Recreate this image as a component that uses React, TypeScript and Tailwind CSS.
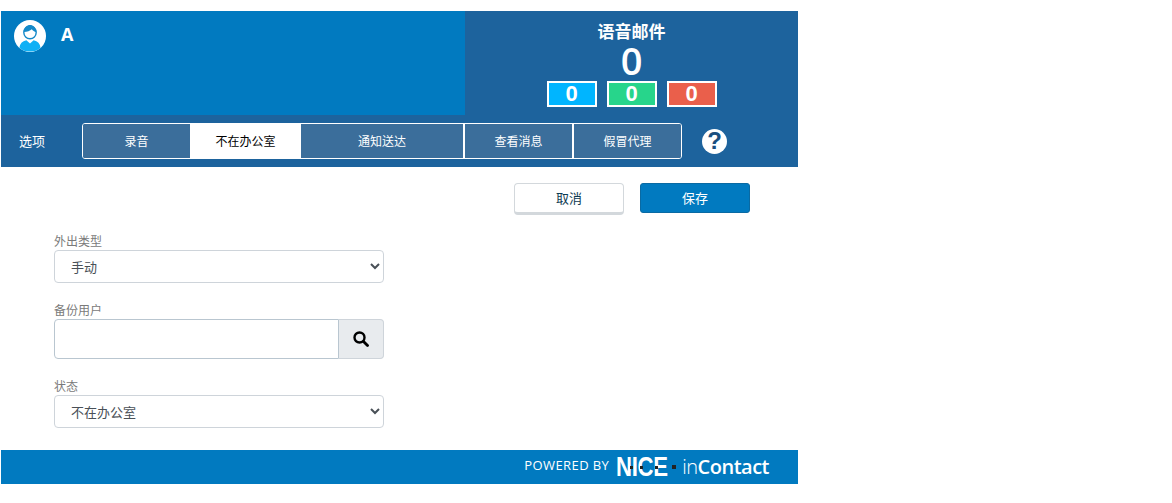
const font = '"Noto Sans CJK SC"';

function Avatar() {
  return (
    <svg width="32" height="32" viewBox="0 0 32 32" className="shrink-0">
      <circle cx="16" cy="16" r="16" fill="#ffffff" />
      <path d="M5.500 28c.3-4.600 2.800-6.600 6.900-7.800l3.600 3.400 3.600-3.400c4.100 1.200 6.600 3.200 6.900 7.800A15.500 15.500 0 0 1 16 31.500 15.500 15.500 0 0 1 5.500 28z" fill="#0fb0f5" />
      <circle cx="16" cy="12.500" r="6.200" fill="none" stroke="#1489c9" strokeWidth="1.400" />
      <path d="M9.800 12c0-4.800 3.200-7 6.200-7s6.200 2.200 6.200 7c-1.800-.4-3.400-1.200-4.400-2.800-1.800 1.600-4.400 2.500-8 2.800z" fill="#1489c9" />
    </svg>
  );
}

function Count({ bg }: { bg: string }) {
  return (
    <div className={`w-[50px] h-[26px] border-2 border-white flex items-center justify-center text-[22px] leading-none font-bold text-white ${bg}`} style={{ fontFamily: '"Liberation Sans", sans-serif' }}>
      0
    </div>
  );
}

function Tab({ w, label, active, cls }: { w: string; label: string; active?: boolean; cls?: string }) {
  return (
    <div className={`${w} h-full flex items-center justify-center text-[12px] ${active ? 'bg-white text-black' : 'bg-[#3b6e9b] text-white'} ${cls ?? ''}`}>
      {label}
    </div>
  );
}

function Field({ label, children, cls }: { label: string; children: React.ReactNode; cls?: string }) {
  return (
    <div className={cls}>
      <div className="h-[16px] text-[12px] leading-[14px] text-[#7a7a7a]">{label}</div>
      {children}
    </div>
  );
}

function Sel({ value }: { value: string }) {
  return (
    <select
      defaultValue={value}
      className="block w-[330px] h-[33px] bg-white border border-[#ced4da] rounded-[4px] pl-[12px] pr-[6px] text-[13px] text-[#495057]"
      style={{ fontFamily: font }}
    >
      <option value={value}>{value}</option>
    </select>
  );
}

export default function App() {
  return (
    <div className="w-[1172px] h-[503px] bg-white pt-[11px] pl-[1px] overflow-hidden" style={{ fontFamily: `${font}, sans-serif` }}>
      <div className="w-[797px]">
        <div className="flex h-[104px]">
          <div className="w-[464px] bg-[#017ac0] flex items-start gap-[15px] pl-[13px] pt-[9px]">
            <Avatar />
            <div className="text-[18px] font-bold leading-[29px] text-white" style={{ fontFamily: '"Open Sans", sans-serif' }}>A</div>
          </div>
          <div className="flex-1 bg-[#1d639d] flex flex-col items-center text-white">
            <div className="h-[20px] mt-[10px] text-[17px] leading-[20px] font-bold">语音邮件</div>
            <div className="h-[40px] text-[38px] leading-[38px] font-semibold" style={{ fontFamily: '"Open Sans", sans-serif' }}>0</div>
            <div className="flex gap-[10px]">
              <Count bg="bg-[#00b5ff]" />
              <Count bg="bg-[#27d58b]" />
              <Count bg="bg-[#ea5f4b]" />
            </div>
          </div>
        </div>

        <div className="h-[52px] bg-[#1d639d] flex items-center">
          <div className="w-[81px] pl-[18px] text-[13px] leading-[18px] -mt-[1px] text-white">选项</div>
          <div className="h-[36px] w-[600px] flex border border-white rounded-[3px] overflow-hidden">
            <Tab w="w-[107px]" label="录音" />
            <Tab w="w-[111px]" label="不在办公室" active />
            <Tab w="w-[164px]" label="通知送达" cls="border-r-2 border-white" />
            <Tab w="w-[109px]" label="查看消息" cls="border-r-2 border-white" />
            <Tab w="flex-1" label="假冒代理" />
          </div>
          <div className="ml-[20px] w-[25px] h-[25px] rounded-full bg-white flex items-center justify-center text-[24px] font-bold leading-none text-[#1a4f80]" style={{ fontFamily: '"Liberation Sans", sans-serif' }}>?</div>
        </div>

        <div className="h-[283px] pt-[16px] pl-[53px]">
          <div className="flex justify-end gap-[16px] pr-[48px] h-[32px] items-start">
            <div className="w-[110px] h-[32px] bg-white border border-[#d3d8dc] border-b-[3px] rounded-[4px] flex items-center justify-center text-[13px] text-[#0e3a52]">取消</div>
            <div className="w-[110px] h-[30px] bg-[#017ac0] border border-[#0a6aa3] rounded-[3px] flex items-center justify-center text-[13px] text-white">保存</div>
          </div>
          <Field label="外出类型" cls="mt-[19px]">
            <Sel value="手动" />
          </Field>
          <Field label="备份用户" cls="mt-[20px]">
            <div className="w-[330px] h-[40px] flex">
              <input className="w-[285px] h-full border border-[#b9c6d0] rounded-l-[4px] bg-white outline-none" />
              <div className="flex-1 h-full bg-[#e8ebee] border border-l-0 border-[#ced4da] rounded-r-[4px] flex items-center justify-center">
                <svg width="16" height="16" viewBox="0 0 16 16" fill="none" stroke="#000000">
                  <circle cx="6.500" cy="6.500" r="5" strokeWidth="2.400" />
                  <path d="M10.500 10.500 14.500 14.500" strokeWidth="2.800" strokeLinecap="round" />
                </svg>
              </div>
            </div>
          </Field>
          <Field label="状态" cls="mt-[20px]">
            <Sel value="不在办公室" />
          </Field>
        </div>

        <div className="h-[34px] bg-[#017ac0] flex items-center justify-end pr-[29px] text-white">
          <span className="text-[13px] tracking-[0.4px] -mt-[2px] mr-[7px]" style={{ fontFamily: '"Open Sans", sans-serif' }}>POWERED BY</span>
          <span className="relative w-[52px] h-[26px] text-[27px] leading-[26px] font-bold whitespace-nowrap">
            <span className="block origin-left scale-x-[0.82] tracking-[-0.4px]" style={{ fontFamily: '"Liberation Sans", sans-serif' }}>NICE</span>
            <span className="absolute left-[14px] top-[12px] w-[3px] h-[3px] bg-[#222222]" />
            <span className="absolute left-[24px] top-[12px] w-[3px] h-[3px] bg-[#222222]" />
            <span className="absolute left-[39px] top-[12px] w-[3px] h-[3px] bg-[#222222]" />
          </span>
          <span className="w-[4px] h-[4px] bg-[#222222] ml-[4px] mr-[4px]" />
          <span className="text-[20px] -mt-[1px] leading-none ml-[2px] tracking-[-0.5px]" style={{ fontFamily: '"Open Sans", sans-serif' }}>
            <span className="font-light">in</span>
            <span className="font-semibold">Contact</span>
          </span>
        </div>
      </div>
    </div>
  );
}
